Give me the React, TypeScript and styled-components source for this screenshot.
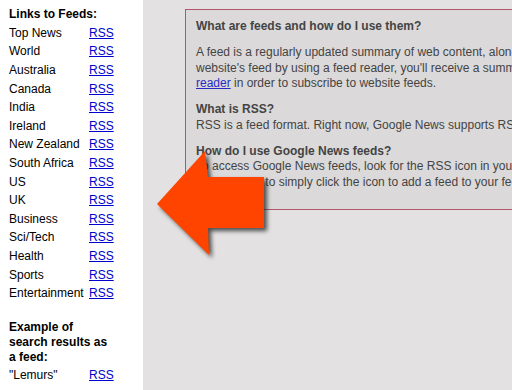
import React from "react";
import styled, { createGlobalStyle } from "styled-components";

const GlobalStyle = createGlobalStyle`
    html, body {
        margin: 0;
        padding: 0;
        width: 512px;
        height: 390px;
        overflow: hidden;
        background: #e3e1e1;
    }
`;

const Page = styled.div`
    position: relative;
    width: 512px;
    height: 390px;
    display: flex;
    font-family: "Liberation Sans", Arial, sans-serif;
    font-size: 12px;
`;

const Sidebar = styled.div`
    width: 143px;
    flex-shrink: 0;
    background: #ffffff;
    padding: 6px 0 0 9px;
    box-sizing: border-box;
    color: #000;
`;

const SideTitle = styled.div`
    font-weight: bold;
    line-height: 17.6px;
`;

const FeedList = styled.div`
    display: grid;
    grid-template-columns: 80px auto;
    grid-auto-rows: 18.6px;
    align-items: center;
`;

const Label = styled.span`
    white-space: nowrap;
`;

const RssLink = styled.a`
    color: #0000cc;
    text-decoration: underline;
    justify-self: start;
`;

const Example = styled.div`
    margin: 17px 0 1px 0;
    width: 104px;
    font-weight: bold;
    line-height: 15px;
`;

const Main = styled.div`
    flex: 1;
    overflow: hidden;
    padding: 9px 0 0 42px;
    background: #e3e1e1;
`;

const InfoBox = styled.div`
    width: 640px;
    background: #dbd9d9;
    border: 1px solid #b2566f;
    padding: 9px 10px 19px 10px;
    color: #444;
    line-height: 15.5px;
`;

const Heading = styled.div<{ $gap?: boolean }>`
    font-weight: bold;
    margin-bottom: ${p => (p.$gap ? "10.5px" : "0")};
    white-space: nowrap;
`;

const Para = styled.div<{ $last?: boolean }>`
    white-space: nowrap;
    margin-bottom: ${p => (p.$last ? "0" : "10.5px")};
`;

const InlineLink = styled.a`
    color: #2b2bc4;
    text-decoration: underline;
`;

const Arrow = styled.svg`
    position: absolute;
    left: 150px;
    top: 145px;
    width: 125px;
    height: 120px;
    overflow: visible;
    filter: drop-shadow(3px 3px 2px rgba(30, 30, 30, 0.75));
`;

const feeds = [
    "Top News",
    "World",
    "Australia",
    "Canada",
    "India",
    "Ireland",
    "New Zealand",
    "South Africa",
    "US",
    "UK",
    "Business",
    "Sci/Tech",
    "Health",
    "Sports",
    "Entertainment",
];

export default function App() {
    return (
        <>
            <GlobalStyle />
            <Page>
                <Sidebar>
                    <SideTitle>Links to Feeds:</SideTitle>
                    <FeedList>
                        {feeds.map(f => (
                            <React.Fragment key={f}>
                                <Label>{f}</Label>
                                <RssLink href="#">RSS</RssLink>
                            </React.Fragment>
                        ))}
                    </FeedList>
                    <Example>Example of search results as a feed:</Example>
                    <FeedList>
                        <Label>"Lemurs"</Label>
                        <RssLink href="#">RSS</RssLink>
                    </FeedList>
                </Sidebar>
                <Main>
                    <InfoBox>
                        <Heading $gap>What are feeds and how do I use them?</Heading>
                        <Para>
                            A feed is a regularly updated summary of web content, along with links to full versions of that content. When you subscribe to a given
                            <br />
                            website's feed by using a feed reader, you'll receive a summary of new content from that website. Important: you must use a feed
                            <br />
                            <InlineLink href="#">reader</InlineLink> in order to subscribe to website feeds.
                        </Para>
                        <Heading>What is RSS?</Heading>
                        <Para>RSS is a feed format. Right now, Google News supports RSS 2.0 and Atom 0.3.</Para>
                        <Heading>How do I use Google News feeds?</Heading>
                        <Para $last>
                            To access Google News feeds, look for the RSS icon in your browser's address bar or on the page.
                            <br />
                            It allows you to simply click the icon to add a feed to your feed reader.
                        </Para>
                    </InfoBox>
                </Main>
                <Arrow viewBox="0 0 125 120">
                    <polygon
                        points="7,59 55,6 58,32 114,32 114,83 58,83 59,110"
                        fill="#ff4400"
                    />
                </Arrow>
            </Page>
        </>
    );
}
